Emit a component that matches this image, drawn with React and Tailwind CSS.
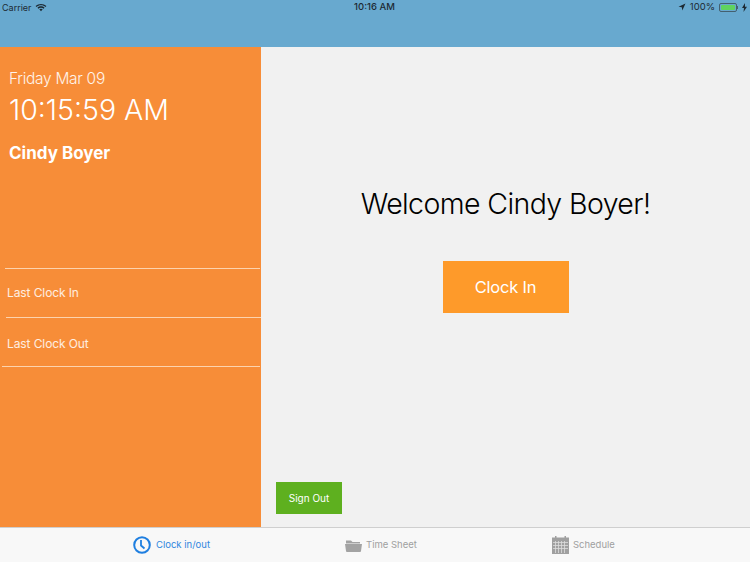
const sans = 'font-["Inter","Liberation_Sans",sans-serif]';

const WifiIcon = () => (
  <svg width="12" height="9" viewBox="0 0 13 10" fill="#1d2a33">
    <path d="M6.5 1C4.2 1 2.1 1.9.5 3.3l1 1.1C2.8 3.2 4.6 2.5 6.5 2.5s3.7.7 5 1.9l1-1.1C10.9 1.9 8.8 1 6.5 1z" />
    <path d="M6.5 3.7c-1.5 0-2.9.6-3.9 1.5l1 1.1c.8-.7 1.8-1.1 2.9-1.1s2.100.4 2.9 1.1l1-1.1c-1-.9-2.4-1.5-3.9-1.5z" />
    <path d="M6.5 6.3c-.8 0-1.4.3-1.9.7l1.9 2.1L8.4 7c-.5-.4-1.100-.7-1.9-.7z" />
  </svg>
);

const StatusBar = () => (
  <div className="flex items-center h-[14px] pl-[2px] pr-[3px] text-[9.5px] leading-none text-[#1d2a33]">
    <div className="flex-1 flex items-center gap-[3px]">
      <span className="text-[9px]">Carrier</span>
      <WifiIcon />
    </div>
    <span className="font-medium">10:16 AM</span>
    <div className="flex-1 flex items-center justify-end gap-[4px]">
      <svg width="8" height="8" viewBox="0 0 8 8" fill="#1d2a33">
        <path d="M7.5.5L.5 3.7l3.3.5.5 3.3z" />
      </svg>
      <span>100%</span>
      <div className="flex items-center">
        <div className="w-[18px] h-[9px] rounded-[2px] border border-[#44606f] p-[1px]">
          <div className="h-full rounded-[1px] bg-[#5fd35f]" />
        </div>
        <div className="w-[1px] h-[3px] bg-[#44606f]" />
      </div>
      <svg width="5" height="9" viewBox="0 0 5 9" fill="#1d2a33">
        <path d="M3 0L0 5h2L1.5 9 5 3.7H3z" />
      </svg>
    </div>
  </div>
);

const SidePanel = () => (
  <div className="w-[261px] shrink-0 bg-[#f78d38] text-white flex flex-col">
    <p className="pl-[9px] pt-[22px] text-[15.5px] leading-[20px] tracking-[-0.3px] font-light text-white/90">Friday Mar 09</p>
    <p className="pl-[9px] pt-[4px] text-[28.5px] leading-[34px] font-light">10:15:59 AM</p>
    <p className="pl-[9px] pt-[15px] text-[17px] leading-[22px] font-bold">Cindy Boyer</p>
    <div className="mt-[104px] ml-[5px] mr-[1px] border-t border-[#fcd3ae]" />
    <p className="pl-[7px] h-[48px] flex items-center text-[12px] tracking-[-0.1px] text-white/85">Last Clock In</p>
    <div className="ml-[6px] -mr-[1px] border-t border-[#fcd3ae]" />
    <p className="pl-[7px] h-[48px] pt-[4px] flex items-center text-[12px] tracking-[-0.1px] text-white/85">Last Clock Out</p>
    <div className="ml-[2px] mr-[1px] border-t border-[#fcd3ae]" />
  </div>
);

const MainPanel = () => (
  <div className="flex-1 bg-[#f1f1f1] flex flex-col">
    <h1 className="mt-[137px] text-center text-[28.5px] leading-[40px] tracking-[-0.6px] font-light text-black">Welcome Cindy Boyer!</h1>
    <button className="mt-[37px] self-center w-[126px] h-[52px] bg-[#fe9a2a] text-white text-[16.5px] tracking-[-0.2px]">
      Clock In
    </button>
    <button className="mt-auto mb-[13px] ml-[15px] self-start w-[66px] h-[32px] bg-[#5eb01f] text-white text-[10px]">
      Sign Out
    </button>
  </div>
);

const TabBar = () => (
  <div className="h-[35px] shrink-0 border-t border-[#cfcfcf] bg-[#f8f8f8] flex items-center pl-[133px] text-[9.5px]">
    <div className="flex items-center gap-[5px] text-[#2f86de]">
      <svg width="18" height="18" viewBox="0 0 18 18" fill="none" stroke="#1f7fe0">
        <circle cx="9" cy="9" r="7.8" strokeWidth="2" />
        <path d="M8 4v5.5l3.5 3" strokeWidth="1.8" />
      </svg>
      <span>Clock in/out</span>
    </div>
    <div className="ml-[135px] flex items-center gap-[4px] text-[#a0a0a0]">
      <svg width="17" height="13" viewBox="0 0 17 13" fill="#a3a3a3">
        <path d="M1 1.5h5L7.5 3H15v1.500H1z" />
        <path d="M0 5h17l-1 7a1 1 0 0 1-1 1H2a1 1 0 0 1-1-1z" />
      </svg>
      <span>Time Sheet</span>
    </div>
    <div className="ml-[135px] flex items-center gap-[4px] text-[#a0a0a0]">
      <svg width="17" height="18" viewBox="0 0 17 18">
        <rect x="0" y="1.5" width="17" height="16.5" fill="#a0a0a0" />
        <rect x="3" y="0" width="1.5" height="3" fill="#a0a0a0" />
        <rect x="12.5" y="0" width="1.5" height="3" fill="#a0a0a0" />
        <path d="M1 6.5h15M1 9.5h15M1 12.5h15M3.5 5v12M6.5 5v12M9.5 5v12M12.5 5v12" stroke="#dcdcdc" strokeWidth="0.8" />
      </svg>
      <span>Schedule</span>
    </div>
  </div>
);

export default function App() {
  return (
    <div className={`w-[750px] h-[562px] overflow-hidden flex flex-col ${sans}`}>
      <div className="h-[47px] shrink-0 bg-[#68a9cf]">
        <StatusBar />
      </div>
      <div className="flex flex-1 min-h-0">
        <SidePanel />
        <MainPanel />
      </div>
      <TabBar />
    </div>
  );
}
